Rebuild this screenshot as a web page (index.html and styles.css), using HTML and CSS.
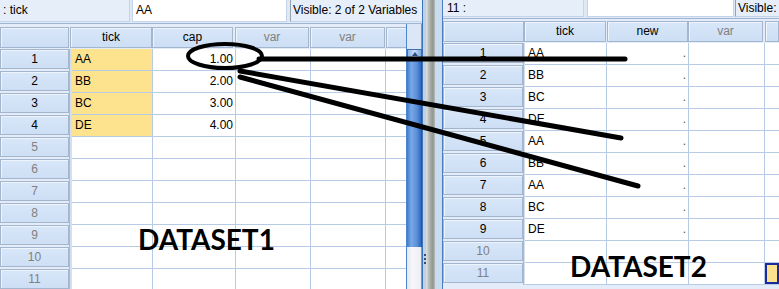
FILE: index.html
```html
<!DOCTYPE html>
<html>
<head>
<meta charset="utf-8">
<link rel="stylesheet" href="styles.css">
</head>
<body>
<div class="screen">
  <div class="win win-left">
    <div class="topbar">
      <div class="ref">: tick</div>
      <div class="val">AA</div>
      <div class="vis">Visible: 2 of 2 Variables</div>
    </div>
    <div class="sheet">
      <div class="grid">
        <div class="hrow">
          <div class="corner"></div>
          <div class="hc h1">tick</div>
          <div class="hc h2">cap</div>
          <div class="hc h3 dim">var</div>
          <div class="hc h4 dim">var</div>
          <div class="hc h5"></div>
        </div>
        <div class="row"><div class="rh">1</div><div class="sep"></div><div class="c c1 y">AA</div><div class="c c2 num">1.00</div><div class="c c3"></div><div class="c c4"></div><div class="c c5"></div></div>
        <div class="row"><div class="rh">2</div><div class="sep"></div><div class="c c1 y">BB</div><div class="c c2 num">2.00</div><div class="c c3"></div><div class="c c4"></div><div class="c c5"></div></div>
        <div class="row"><div class="rh">3</div><div class="sep"></div><div class="c c1 y">BC</div><div class="c c2 num">3.00</div><div class="c c3"></div><div class="c c4"></div><div class="c c5"></div></div>
        <div class="row"><div class="rh">4</div><div class="sep"></div><div class="c c1 y">DE</div><div class="c c2 num">4.00</div><div class="c c3"></div><div class="c c4"></div><div class="c c5"></div></div>
        <div class="row"><div class="rh dim">5</div><div class="sep"></div><div class="c c1"></div><div class="c c2"></div><div class="c c3"></div><div class="c c4"></div><div class="c c5"></div></div>
        <div class="row"><div class="rh dim">6</div><div class="sep"></div><div class="c c1"></div><div class="c c2"></div><div class="c c3"></div><div class="c c4"></div><div class="c c5"></div></div>
        <div class="row"><div class="rh dim">7</div><div class="sep"></div><div class="c c1"></div><div class="c c2"></div><div class="c c3"></div><div class="c c4"></div><div class="c c5"></div></div>
        <div class="row"><div class="rh dim">8</div><div class="sep"></div><div class="c c1"></div><div class="c c2"></div><div class="c c3"></div><div class="c c4"></div><div class="c c5"></div></div>
        <div class="row"><div class="rh dim">9</div><div class="sep"></div><div class="c c1"></div><div class="c c2"></div><div class="c c3"></div><div class="c c4"></div><div class="c c5"></div></div>
        <div class="row"><div class="rh dim">10</div><div class="sep"></div><div class="c c1"></div><div class="c c2"></div><div class="c c3"></div><div class="c c4"></div><div class="c c5"></div></div>
        <div class="row"><div class="rh dim">11</div><div class="sep"></div><div class="c c1"></div><div class="c c2"></div><div class="c c3"></div><div class="c c4"></div><div class="c c5"></div></div>
      </div>
      <div class="vscroll">
        <div class="vs-head"></div>
        <div class="vs-up"><span class="tri"></span></div>
        <div class="vs-thumb"></div>
        <div class="vs-track"></div>
      </div>
    </div>
  </div>

  <div class="divider"><span class="grip"></span></div>

  <div class="win win-right">
    <div class="topbar">
      <div class="ref">11 :</div>
      <div class="val"></div>
      <div class="vis">Visible:</div>
    </div>
    <div class="sheet">
      <div class="grid">
        <div class="hrow">
          <div class="corner"></div>
          <div class="hc r1">tick</div>
          <div class="hc r2">new</div>
          <div class="hc r3 dim">var</div>
          <div class="hc r4"></div>
        </div>
        <div class="row"><div class="rh">1</div><div class="sep"></div><div class="c d1">AA</div><div class="c d2 num dot">.</div><div class="c d3"></div><div class="c d4"></div></div>
        <div class="row"><div class="rh">2</div><div class="sep"></div><div class="c d1">BB</div><div class="c d2 num dot">.</div><div class="c d3"></div><div class="c d4"></div></div>
        <div class="row"><div class="rh">3</div><div class="sep"></div><div class="c d1">BC</div><div class="c d2 num dot">.</div><div class="c d3"></div><div class="c d4"></div></div>
        <div class="row"><div class="rh">4</div><div class="sep"></div><div class="c d1">DE</div><div class="c d2 num dot">.</div><div class="c d3"></div><div class="c d4"></div></div>
        <div class="row"><div class="rh">5</div><div class="sep"></div><div class="c d1">AA</div><div class="c d2 num dot">.</div><div class="c d3"></div><div class="c d4"></div></div>
        <div class="row"><div class="rh">6</div><div class="sep"></div><div class="c d1">BB</div><div class="c d2 num dot">.</div><div class="c d3"></div><div class="c d4"></div></div>
        <div class="row"><div class="rh">7</div><div class="sep"></div><div class="c d1">AA</div><div class="c d2 num dot">.</div><div class="c d3"></div><div class="c d4"></div></div>
        <div class="row"><div class="rh">8</div><div class="sep"></div><div class="c d1">BC</div><div class="c d2 num dot">.</div><div class="c d3"></div><div class="c d4"></div></div>
        <div class="row"><div class="rh">9</div><div class="sep"></div><div class="c d1">DE</div><div class="c d2 num dot">.</div><div class="c d3"></div><div class="c d4"></div></div>
        <div class="row"><div class="rh dim">10</div><div class="sep"></div><div class="c d1"></div><div class="c d2"></div><div class="c d3"></div><div class="c d4"></div></div>
        <div class="row"><div class="rh dim">11</div><div class="sep"></div><div class="c d1"></div><div class="c d2"></div><div class="c d3"></div><div class="c d4 sel"></div></div>
      </div>
    </div>
  </div>
</div>

<svg class="marks" width="779" height="289" viewBox="0 0 779 289">
  <ellipse cx="225" cy="56" rx="37" ry="12" fill="none" stroke="#000" stroke-width="4"/>
  <line x1="259" y1="59" x2="625" y2="59" stroke="#000" stroke-width="5" stroke-linecap="round"/>
  <line x1="240" y1="71" x2="621" y2="138" stroke="#000" stroke-width="5" stroke-linecap="round"/>
  <line x1="240" y1="77" x2="638" y2="186" stroke="#000" stroke-width="5" stroke-linecap="round"/>
</svg>
<div class="label label-1">DATASET1</div>
<div class="label label-2">DATASET2</div>
</body>
</html>
```

FILE: styles.css
```css
body {
  margin: 0;
  width: 779px;
  height: 289px;
  overflow: hidden;
  position: relative;
  background: #fff;
  font-family: "Liberation Sans", Arial, sans-serif;
  font-size: 12px;
  color: #000;
}

.screen {
  display: flex;
  height: 289px;
}

.win {
  display: flex;
  flex-direction: column;
  background: #dfe9f5;
  overflow: hidden;
}

.win-left {
  width: 422px;
}

.win-right {
  flex: 1;
  border-left: 1px solid #4a7ec2;
}

/* top bar */
.topbar {
  display: flex;
  flex: none;
  height: 23px;
}

.win-right .topbar {
  height: 18px;
}

.ref,
.val,
.vis {
  box-sizing: border-box;
  height: 22px;
  line-height: 21px;
  white-space: nowrap;
  overflow: hidden;
}

.win-right .ref,
.win-right .val,
.win-right .vis {
  height: 17px;
  line-height: 16px;
}

.ref {
  width: 130px;
  padding-left: 3px;
  background: #e5eef9;
  border-right: 1px solid #c5d5e9;
  border-bottom: 1px solid #c5d5e9;
}

.val {
  width: 155px;
  margin-left: 2px;
  padding-left: 3px;
  background: #fff;
  border: 1px solid #c5d5e9;
  border-top: none;
}

.vis {
  flex: 1;
  margin-left: 3px;
  padding-left: 2px;
  background: #e5eef9;
  border-left: 1px solid #98a3b2;
  border-bottom: 1px solid #c5d5e9;
}

.win-right .ref {
  width: 141px;
  padding-left: 4px;
}

.win-right .val {
  width: 147px;
  margin-left: 3px;
}

.win-right .vis {
  margin-left: 1px;
}

/* sheet */
.sheet {
  flex: 1;
  display: flex;
  min-height: 0;
  border-top: 1px solid #9db6d6;
  background: #e3ecf8;
}

.grid {
  flex: 1;
  padding-top: 3px;
  overflow: hidden;
}

.win-right .grid {
  padding-top: 2px;
}

.hrow {
  display: flex;
  height: 21px;
  margin-bottom: 1px;
}

.corner,
.hc,
.rh {
  box-sizing: border-box;
  background: linear-gradient(#d8e6f8, #cddff5);
  border: 1px solid #a4b6cd;
  box-shadow: inset 1px 1px 0 #eef4fc;
  text-align: center;
  flex: none;
}

.corner {
  width: 69px;
}

.hc {
  line-height: 19px;
}

.h1 { width: 82px; }
.h2 { width: 81px; margin-left: 0; }
.h3 { width: 74px; margin-left: 2px; }
.h4 { width: 75px; margin-left: 1px; }
.h5 { width: 21px; margin-left: 1px; }

.win-left .hc.h1 { margin-left: 1px; }

.win-right .corner { width: 81px; }
.r1 { width: 82px; }
.r2 { width: 81px; margin-left: 1px; }
.r3 { width: 75px; }
.r4 { flex: 1; margin-left: 2px; }

.dim {
  color: #808080;
}

.row {
  display: flex;
  height: 22px;
}

.rh {
  width: 69px;
  height: 20px;
  line-height: 18px;
}

.win-right .rh {
  width: 80px;
}

.sep {
  flex: none;
  width: 3px;
  box-sizing: border-box;
  border-left: 1px solid #aab8cb;
  background: #d5e0ee;
}

.win-right .sep {
  width: 2px;
}

.c {
  flex: none;
  box-sizing: border-box;
  height: 22px;
  padding: 0 3px;
  line-height: 21px;
  background: #fff;
  border-right: 1px solid #b5cbe6;
  border-bottom: 1px solid #b5cbe6;
  white-space: nowrap;
  overflow: hidden;
}

.c1 { width: 81px; }
.c2 { width: 83px; }
.c3 { width: 75px; }
.c4 { width: 75px; }
.c5 { flex: 1; border-right: none; }

.d1 { width: 82px; }
.d2 { width: 82px; }
.d3 { width: 76px; }
.d4 { flex: 1; border-right: none; }

.num {
  text-align: right;
  padding-right: 2px;
}

.dot {
  color: #6a5035;
}

.y {
  background: #fee38f;
}

.sel {
  background: #fee38f;
  box-shadow: inset 2px 2px 0 #1b2a9c, inset -2px -2px 0 #1b2a9c;
}

/* vertical scrollbar */
.vscroll {
  flex: none;
  width: 16px;
  display: flex;
  flex-direction: column;
  border-left: 1px solid #4d86d0;
  box-sizing: border-box;
}

.vs-head {
  height: 25px;
  background: #dbe7f6;
  border-right: 1px solid #6f9bd3;
}

.vs-up {
  height: 9px;
  position: relative;
  background: linear-gradient(90deg, #8fb6ea, #c9dcf5 50%, #7ea8e2);
  border: 1px solid #3d6fb5;
  border-bottom: none;
}

.tri {
  position: absolute;
  left: 4px;
  top: 2px;
  width: 0;
  height: 0;
  border-left: 3px solid transparent;
  border-right: 3px solid transparent;
  border-bottom: 4px solid #2f4f7a;
}

.vs-thumb {
  height: 188px;
  background: linear-gradient(90deg, #3f7acb 0, #79a8e5 30%, #5b90d9 70%, #2f66bb 100%);
  border-right: 1px solid #2558a8;
}

.vs-track {
  flex: 1;
  background: linear-gradient(90deg, #e6e8ee, #f7f7fa 40%, #eceef3);
  border-right: 1px solid #6f9bd3;
}

/* divider between windows */
.divider {
  flex: none;
  width: 20px;
  position: relative;
  background: linear-gradient(90deg, #3e72b8 0 1px, #bcd1ea 1px 4px, #dfe2df 4px, #a9aeaa 8px, #8f9591 11px, #b9bdb9 13px, #c9dcf0 13px 20px);
}

.grip {
  position: absolute;
  left: 2px;
  top: 254px;
  width: 2px;
  height: 12px;
  background: repeating-linear-gradient(#2d4f86 0 2px, transparent 2px 4px);
}

/* overlay marks */
.marks {
  position: absolute;
  left: 0;
  top: 0;
  pointer-events: none;
}

.label {
  position: absolute;
  font-family: Lato, "Open Sans", sans-serif;
  font-weight: 700;
  font-size: 28px;
  line-height: 28px;
  color: #000;
  white-space: nowrap;
}

.label-1 {
  left: 138px;
  top: 225px;
}

.label-2 {
  left: 570px;
  top: 252px;
}
```
